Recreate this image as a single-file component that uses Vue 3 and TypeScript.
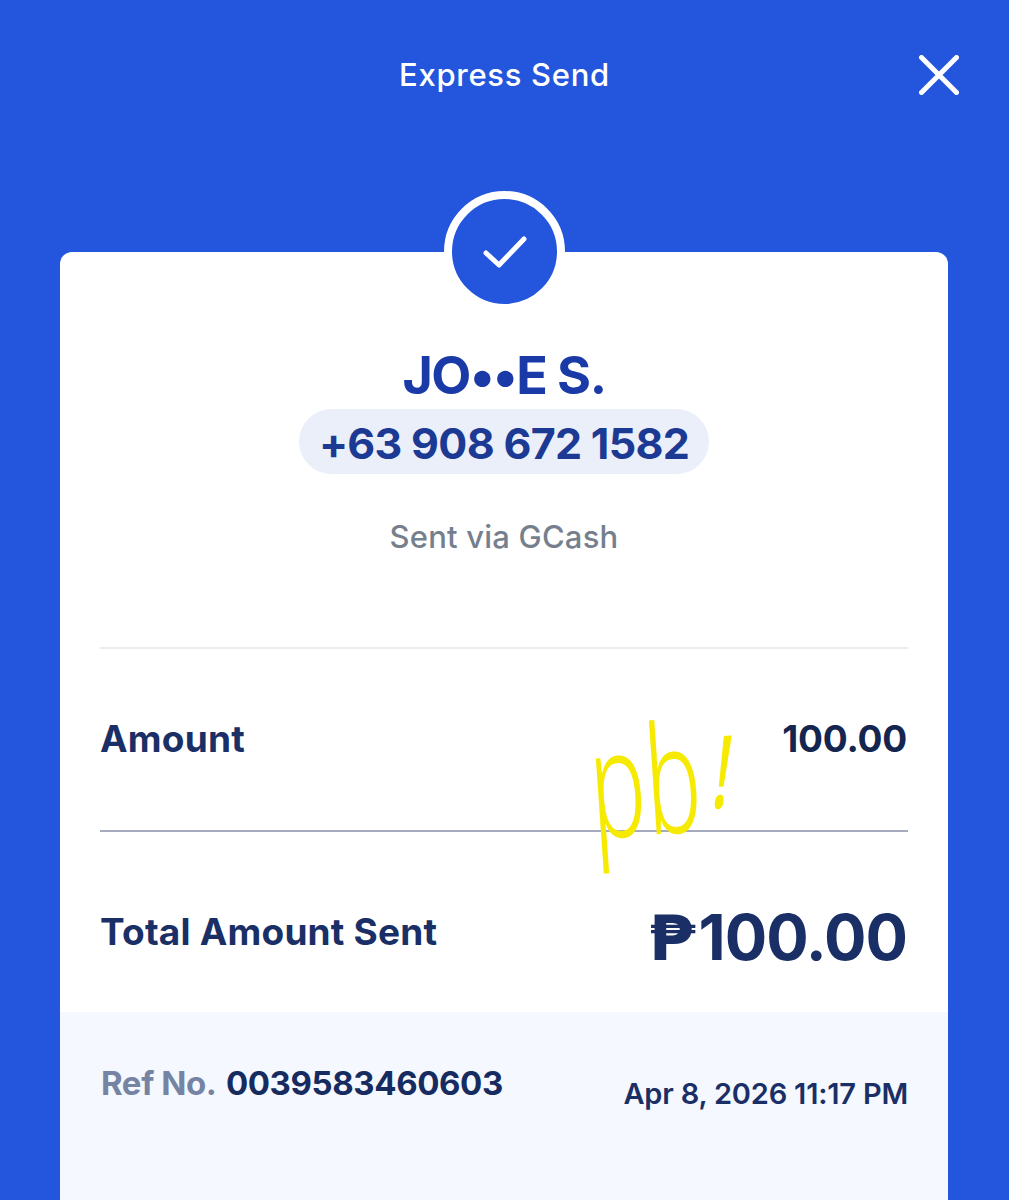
<template>
  <div class="screen">
    <header class="top-bar">
      <span></span>
      <h1 class="title">Express Send</h1>
      <button class="close" aria-label="Close">
        <svg width="40" height="40" viewBox="0 0 40 40">
          <path d="M2.5 2.5 L37.5 37.5 M37.5 2.5 L2.5 37.5" stroke="#fff" stroke-width="5" stroke-linecap="round" fill="none" />
        </svg>
      </button>
    </header>

    <main class="receipt">
      <div class="badge">
        <svg width="46" height="36" viewBox="0 0 46 36">
          <path d="M4 19 L17 31 L42 5" stroke="#fff" stroke-width="5" stroke-linecap="round" stroke-linejoin="round" fill="none" />
        </svg>
      </div>

      <section class="recipient">
        <div class="name">{{ transaction.name }}</div>
        <div class="phone">{{ transaction.phone }}</div>
        <div class="via">{{ transaction.via }}</div>
      </section>

      <section class="row amount-row">
        <span class="label">Amount</span>
        <span class="value">{{ transaction.amount }}</span>
      </section>

      <section class="row total-row">
        <span class="label">Total Amount Sent</span>
        <span class="total"><span class="peso">₱</span>{{ transaction.amount }}</span>
      </section>

      <footer class="meta">
        <div class="ref"><span class="ref-label">Ref No.</span> {{ transaction.ref }}</div>
        <div class="date">{{ transaction.date }}</div>
      </footer>

      <span class="note">pb<span class="note-mark">!</span></span>
    </main>
  </div>
</template>

<script setup lang="ts">
interface Transaction {
  name: string
  phone: string
  via: string
  amount: string
  ref: string
  date: string
}

const transaction: Transaction = {
  name: 'JO••E S.',
  phone: '+63 908 672 1582',
  via: 'Sent via GCash',
  amount: '100.00',
  ref: '0039583460603',
  date: 'Apr 8, 2026 11:17 PM'
}
</script>

<style>
html,
body {
  margin: 0;
  background: #2356dc;
}
</style>

<style scoped>
.screen {
  height: 1200px;
  overflow: hidden;
  background: #2356dc;
  font-family: Inter, "Noto Sans", sans-serif;
  color: #1a2f66;
}

.top-bar {
  display: grid;
  grid-template-columns: 1fr auto 1fr;
  align-items: center;
  height: 150px;
  padding: 0 50px;
}

.title {
  margin: 0 0 2px;
  color: #fff;
  font-size: 31px;
  font-weight: 500;
  letter-spacing: 0.7px;
}

.close {
  justify-self: end;
  display: flex;
  padding: 0;
  border: none;
  background: none;
}

.receipt {
  position: relative;
  display: flex;
  flex-direction: column;
  height: 948px;
  margin: 102px 61px 0 60px;
  background: #fff;
  border-radius: 12px 12px 0 0;
}

.badge {
  position: absolute;
  top: -61px;
  left: 384px;
  display: flex;
  align-items: center;
  justify-content: center;
  width: 105px;
  height: 105px;
  border: 8px solid #fff;
  border-radius: 50%;
  background: #2356dc;
}

.recipient {
  display: flex;
  flex-direction: column;
  align-items: center;
  height: 397px;
  margin: 0 40px;
  padding-top: 91px;
  box-sizing: border-box;
  border-bottom: 2px solid #e9ecf0;
}

.name {
  color: #1a3aa8;
  font-size: 52px;
  font-weight: 700;
  line-height: 65px;
  letter-spacing: -1.5px;
}

.phone {
  margin-top: 1px;
  padding: 0 20px;
  height: 65px;
  border-radius: 33px;
  background: #eaeff9;
  color: #1c3a94;
  font-size: 43px;
  font-weight: 700;
  line-height: 69px;
  letter-spacing: -0.7px;
}

.via {
  margin-top: 42px;
  color: #767f8e;
  font-size: 31px;
  font-weight: 500;
  line-height: 42px;
  letter-spacing: 0.2px;
}

.row {
  display: flex;
  justify-content: space-between;
  align-items: flex-start;
  margin: 0 40px;
  padding: 0 1px;
  box-sizing: border-box;
}

.amount-row {
  height: 183px;
  padding-top: 67px;
  border-bottom: 2px solid #a5aabe;
}

.total-row {
  height: 180px;
}

.label {
  margin-left: -1px;
  font-size: 37px;
  font-weight: 700;
  line-height: 46px;
  letter-spacing: 0.2px;
}

.total-row .label {
  margin-top: 77px;
}

.value {
  color: #14264f;
  font-size: 37px;
  font-weight: 700;
  line-height: 46px;
  letter-spacing: -0.2px;
}

.total {
  margin-top: 67px;
  font-size: 63px;
  font-weight: 700;
  line-height: 76px;
  letter-spacing: -1px;
}

.peso {
  display: inline-block;
  margin-left: 6px;
  margin-right: 4px;
  font-family: "DejaVu Sans", sans-serif;
  font-size: 62px;
  transform: scaleX(1.08);
  transform-origin: right center;
}

.meta {
  flex: 1;
  display: flex;
  justify-content: space-between;
  padding: 49px 40px 0 41px;
  background: #f5f8fe;
}

.ref {
  color: #162c60;
  font-size: 33px;
  font-weight: 700;
  line-height: 44px;
  letter-spacing: -0.4px;
}

.ref-label {
  margin-right: 2px;
  color: #7684a4;
}

.date {
  margin-top: 15px;
  color: #1a2f66;
  font-size: 29px;
  font-weight: 600;
  line-height: 36px;
  letter-spacing: -0.2px;
}

/* hand-written yellow marker note over the amount row */
.note {
  position: absolute;
  top: 454px;
  left: 524px;
  color: #f5ea00;
  font-family: "Noto Sans", sans-serif;
  font-size: 150px;
  font-weight: 300;
  line-height: 1;
  transform: rotate(-4deg) scaleX(0.62);
  transform-origin: left top;
}

.note-mark {
  display: inline-block;
  margin-left: 24px;
  font-size: 100px;
  font-weight: 500;
  transform: translateY(-22px) skewX(-18deg);
}
</style>
